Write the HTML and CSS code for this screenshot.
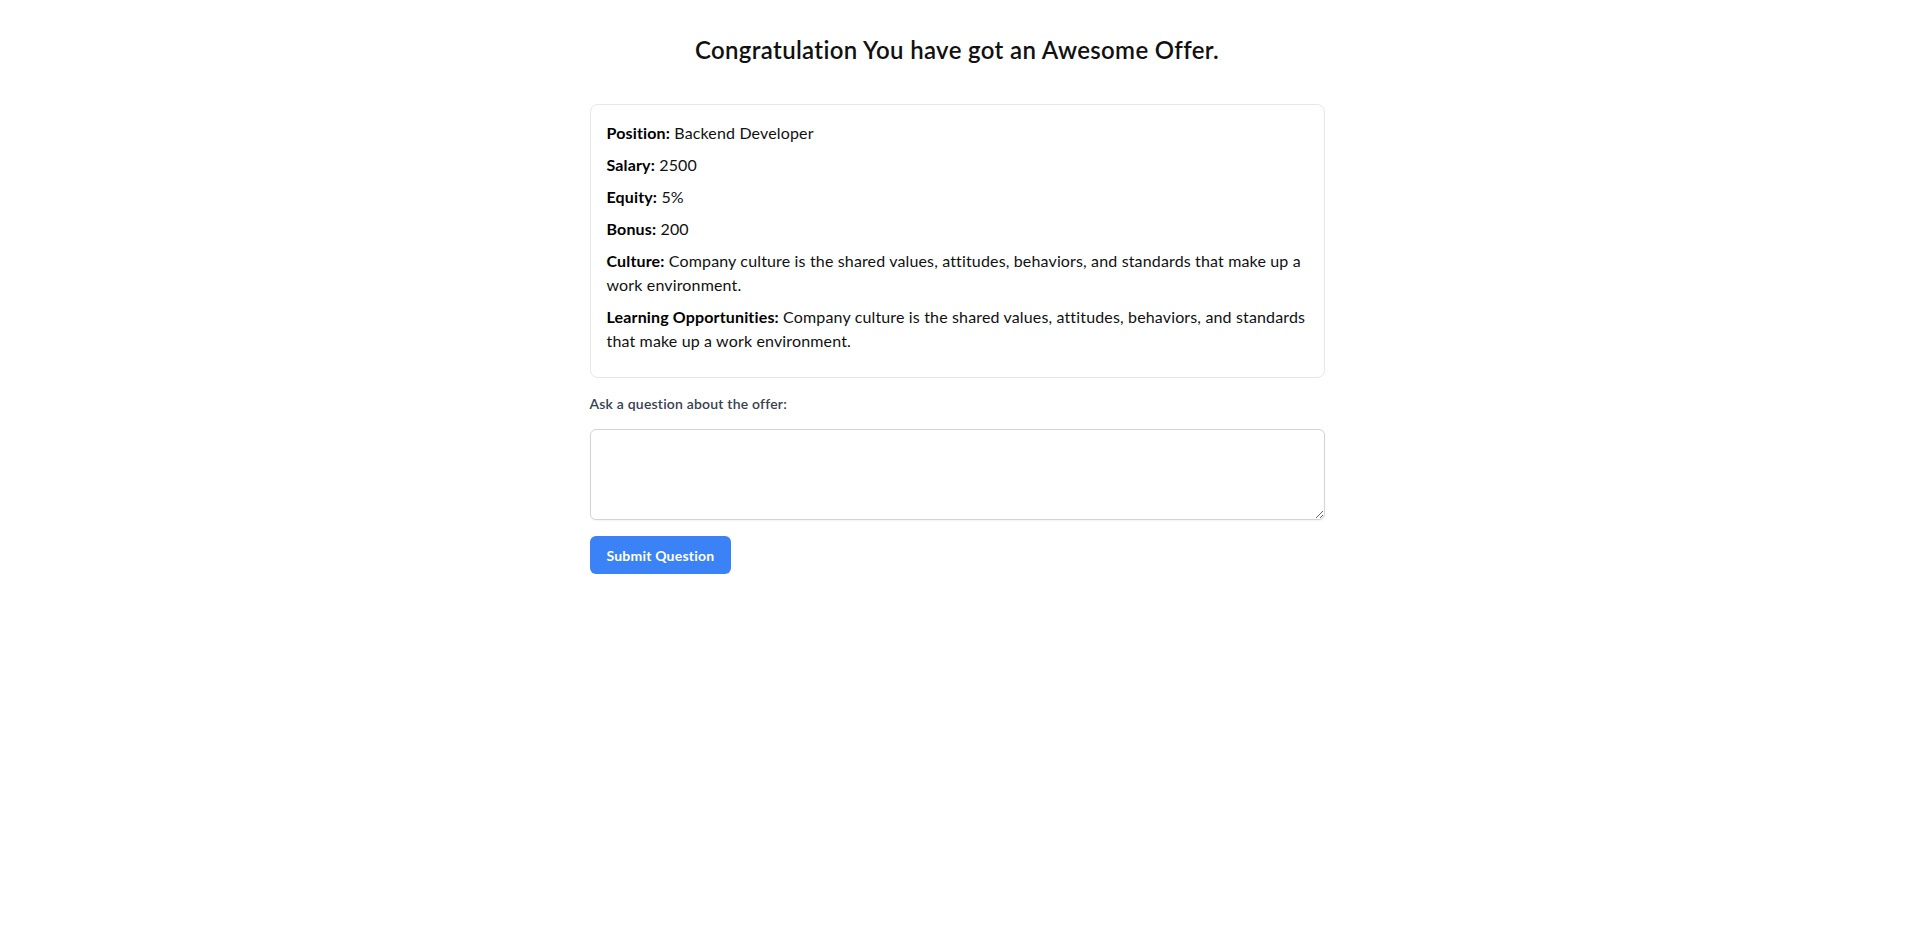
FILE: index.html
```html
<!DOCTYPE html>
<html lang="en">
<head>
<meta charset="utf-8">
<title>Offer</title>
<link rel="stylesheet" href="styles.css">
</head>
<body>
<main class="container">
  <h1 class="title">Congratulation You have got an Awesome Offer.</h1>
  <section class="card">
    <p><strong>Position:</strong> Backend Developer</p>
    <p><strong>Salary:</strong> 2500</p>
    <p><strong>Equity:</strong> 5%</p>
    <p><strong>Bonus:</strong> 200</p>
    <p><strong>Culture:</strong> Company culture is the shared values, attitudes, behaviors, and standards that make up a work environment.</p>
    <p><strong>Learning Opportunities:</strong> Company culture is the shared values, attitudes, behaviors, and standards that make up a work environment.</p>
  </section>
  <form class="ask">
    <label class="label" for="q">Ask a question about the offer:</label>
    <textarea id="q" class="textarea" rows="3"></textarea>
    <button type="button" class="btn">Submit Question</button>
  </form>
</main>
</body>
</html>
```

FILE: styles.css
```css
* { box-sizing: border-box; }
html, body { margin: 0; padding: 0; background: #fff; }
body {
  font-family: Lato, "Noto Sans", sans-serif;
  color: #000;
  font-size: 16px;
  line-height: 24px;
  letter-spacing: 0.15px;
}
.container {
  max-width: 768px;
  margin: 0 auto;
  padding: 34px 18px 0 15px;
}
.title {
  margin: 0 0 38px;
  text-align: center;
  font-size: 24px;
  line-height: 32px;
  font-weight: 600;
  letter-spacing: 0.35px;
  color: #111;
}
.card {
  border: 1px solid #e5e7eb;
  border-radius: 8px;
  padding: 16px 16px 16px 16px;
}
.card p {
  margin: 0 0 8px;
  color: #111;
}
.card strong { font-weight: 700; color: #000; }
.ask {
  display: flex;
  flex-direction: column;
  align-items: flex-start;
}
.label {
  margin-top: 16px;
  font-size: 14px;
  line-height: 20px;
  font-weight: 600;
  letter-spacing: 0.2px;
  color: #374151;
}
.textarea {
  margin-top: 15px;
  width: 100%;
  height: 91px;
  border: 1px solid #d1d5db;
  border-radius: 6px;
  box-shadow: 0 1px 2px rgba(0,0,0,0.05);
  padding: 8px 12px;
  font: inherit;
  resize: vertical;
}
.btn {
  margin-top: 16px;
  height: 38px;
  padding: 0 17px;
  border: 0;
  border-radius: 6px;
  background: #3b82f6;
  color: #fff;
  font-family: inherit;
  font-size: 14px;
  font-weight: 700;
  letter-spacing: 0.2px;
  cursor: pointer;
}
```
